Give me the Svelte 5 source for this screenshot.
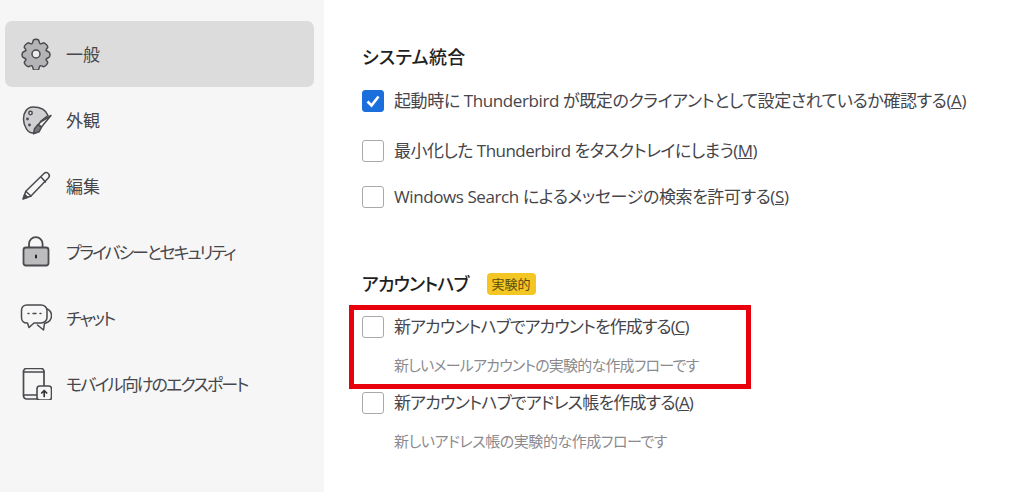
<script>
  const nav = [
    { id: 'gear', label: '一般', active: true },
    { id: 'palette', label: '外観' },
    { id: 'pencil', label: '編集' },
    { id: 'lock', label: 'プライバシーとセキュリティ', spacing: 'tighter' },
    { id: 'chat', label: 'チャット', spacing: 'tight' },
    { id: 'mobile', label: 'モバイル向けのエクスポート', spacing: 'tight' }
  ];
</script>

<div class="page">
  <nav class="side">
    {#each nav as item}
      <div class="item" class:active={item.active}>
        <svg class="ico" viewBox="0 0 32 32" width="32" height="32" fill="none" stroke="#4a4a4f" stroke-width="1.5" stroke-linejoin="round" stroke-linecap="round">
          {#if item.id === 'gear'}
            <path fill="#b4b4b6" d="M13.500 2c.8-1 4.200-1 5 0 .7 1 .6 3.300 1.700 3.800 1.100.5 2.500-1.200 3.900-.9 1.400.3 3.700 2.900 3.600 4.200-.1 1.200-1.900 2.100-1.600 3.200.3 1.100 2.700 1.300 3.300 2.300.5 1 .5 3.400 0 4.300-.6 1-3 1.200-3.300 2.300-.3 1.100 1.500 2 1.600 3.200.1 1.300-2.200 3.900-3.600 4.200-1.400.3-2.800-1.400-3.900-.9-1.100.5-1 2.800-1.700 3.800-.8 1-4.200 1-5 0-.7-1-.6-3.300-1.700-3.800-1.100-.5-2.500 1.200-3.900.9-1.400-.3-3.700-2.900-3.600-4.200.1-1.200 1.900-2.100 1.600-3.200-.3-1.100-2.700-1.300-3.300-2.300-.5-1-.5-3.300 0-4.300.6-1 3-1.200 3.300-2.300.3-1.100-1.500-2-1.600-3.200-.1-1.300 2.200-3.900 3.600-4.200 1.400-.3 2.800 1.400 3.900.9 1.100-.5 1-2.800 1.700-3.800z" />
            <circle cx="16" cy="16" r="4" fill="#ececec" />
          {:else if item.id === 'palette'}
            <path fill="#d0d0d2" d="M13 3C7 3 3.500 8.500 3.500 15c0 7.500 4.500 14 9.500 14 2.500 0 3-1.500 3.500-3.500L21 17l7-5.500C26 6 20 3 13 3z" />
            <circle cx="10.500" cy="9" r="1.700" fill="#f6f6f6" />
            <circle cx="7.500" cy="15" r="1.400" fill="#4a4a4f" stroke="none" />
            <circle cx="9.500" cy="21" r="1.400" fill="#4a4a4f" stroke="none" />
            <path fill="#f6f6f6" d="M31 11.500 20.500 18l-2 2.500 3 2.500 2-2.500z" />
            <path fill="#77777a" d="M18 20.500l3.500 2.800-2.500 4.500-5.500 2 1-5z" />
          {:else if item.id === 'pencil'}
            <path fill="#f6f6f6" d="M24 3.500c1.500-1.500 3.500-1 4.500.2 1 1.200 1.200 3-.2 4.300L11 26l-8 3 2.800-7.800z" />
            <path d="M21 7l4.500 5M6 21.500l5 4.500" />
            <path fill="#4a4a4f" d="M3.500 28.500l1.200-4 2.800 2.800z" />
          {:else if item.id === 'lock'}
            <path d="M9 11.500V8a6.800 6.800 0 0 1 13.600 0v3.500" stroke-width="1.800" />
            <rect x="3.500" y="11.500" width="25" height="18" rx="2.500" fill="#bcbcbe" stroke-width="1.800" />
            <rect x="15" y="18.500" width="2" height="4" rx="1" fill="#222" stroke="none" />
          {:else if item.id === 'chat'}
            <path d="M26 6.500c3.500 1.200 5.500 3.500 5.500 7s-1.500 6-5 7.300l-2 .7-1 6.500-6-5" />
            <path fill="#f6f6f6" d="M7 3h14c3.500 0 6 2.500 6 5.500v7c0 3-2.500 5.500-6 5.500H14l-5 4.500-1.500-4.500H7c-3.500 0-5.500-2.500-5.500-5.500v-7C1.500 5.500 3.500 3 7 3z" />
            <path d="M8 11.500h1M13 11.500h3M20 11.500h1" stroke-width="1.400" />
          {:else}
            <path d="M17 31H6.500c-1.500 0-3-1.300-3-3V3.500c0-1.700 1.500-3 3-3H21c1.500 0 3 1.300 3 3V19" stroke-width="1.700" />
            <path d="M3.500 4h20.500M3.500 27h13" stroke-width="1.400" />
            <rect x="17" y="18" width="14.500" height="14" rx="2.800" fill="#f6f6f6" stroke-width="1.600" />
            <path d="M24.200 28.500v-6M21.700 25 24.200 22.500l2.500 2.500" stroke="#333" stroke-width="1.700" />
          {/if}
        </svg>
        <span class="lab {item.spacing ?? ''}">{item.label}</span>
      </div>
    {/each}
  </nav>

  <main class="main">
    <h2 class="h first">システム統合</h2>
    <label class="row r1"><span class="box on"><svg viewBox="0 0 22 22" width="22" height="22"><path d="M5.500 11.500 9.500 15.500 16.500 6.500" fill="none" stroke="#fff" stroke-width="2.600" /></svg></span><span>起動時に Thunderbird が既定のクライアントとして設定されているか確認する(<u>A</u>)</span></label>
    <label class="row r2"><span class="box"></span><span>最小化した Thunderbird をタスクトレイにしまう(<u>M</u>)</span></label>
    <label class="row r3"><span class="box"></span><span>Windows Search によるメッセージの検索を許可する(<u>S</u>)</span></label>

    <div class="hrow">
      <h2 class="h kana">アカウントハブ</h2>
      <span class="badge">実験的</span>
    </div>
    <div class="hub">
      <div class="mark"></div>
      <label class="row k1"><span class="box"></span><span>新アカウントハブでアカウントを作成する(<u>C</u>)</span></label>
      <p class="desc d1">新しいメールアカウントの実験的な作成フローです</p>
      <label class="row k2"><span class="box"></span><span>新アカウントハブでアドレス帳を作成する(<u>A</u>)</span></label>
      <p class="desc d2">新しいアドレス帳の実験的な作成フローです</p>
    </div>
  </main>
</div>

<style>
  :global(body) { margin: 0; background: #fff; }
  .page {
    display: flex;
    width: 1024px;
    height: 492px;
    overflow: hidden;
    font-family: "Open Sans", "Noto Sans CJK JP", sans-serif;
    font-feature-settings: "palt";
    color: #3c3c41;
  }
  .side {
    flex: 0 0 324px;
    box-sizing: border-box;
    background: #f6f6f6;
    padding: 21px 10px 0 5px;
  }
  .item {
    display: flex;
    align-items: center;
    height: 66px;
    padding-left: 15px;
    border-radius: 7px;
  }
  .item.active { background: #dcdcdc; }
  .ico { flex: none; }
  .lab { margin: -2px 0 0 14px; font-size: 17px; color: #46464b; letter-spacing: 0.1px; }
  .lab.tight { letter-spacing: -1.85px; }
  .lab.tighter { letter-spacing: -2.15px; }
  .main { flex: 1; padding: 0 0 0 38px; }
  .h { margin: 0; font-size: 18px; font-weight: 500; line-height: 24px; color: #1f1f23; letter-spacing: 0.35px; }
  .h.kana { letter-spacing: -0.85px; }
  .first { margin-top: 45px; }
  .row {
    display: flex;
    align-items: center;
    gap: 10px;
    height: 24px;
    font-size: 17px;
    line-height: 24px;
    white-space: nowrap;
    color: #45454a;
  }
  .r1 { margin-top: 20px; letter-spacing: -0.4px; }
  .r2 { margin-top: 26px; letter-spacing: -0.53px; }
  .r3 { margin-top: 22px; letter-spacing: -0.41px; }
  .k1 { letter-spacing: -0.93px; }
  .k2 { letter-spacing: -0.8px; }
  .box {
    flex: none;
    box-sizing: border-box;
    width: 22px;
    height: 22px;
    border: 1px solid #a9a9ac;
    border-radius: 3px;
    background: #fff;
  }
  .box.on { background: #1b6fdc; border-color: #1b6fdc; }
  .box.on svg { display: block; margin: -1px; }
  .hrow { display: flex; align-items: center; gap: 18px; margin-top: 63px; height: 24px; }
  .badge {
    padding: 0 5px;
    height: 22px;
    line-height: 22px;
    font-size: 13px;
    border-radius: 4px;
    background: #f3c623;
    color: #5c4a10;
  }
  .hub { position: relative; margin-top: 19px; }
  .mark {
    position: absolute;
    left: -13px;
    top: -10px;
    width: 392px;
    height: 74px;
    border: 5px solid #e8000c;
    pointer-events: none;
  }
  .desc {
    margin: 14px 0 14px 32px;
    height: 24px;
    font-size: 15px;
    line-height: 24px;
    color: #8b8b8f;
    white-space: nowrap;
  }
  .d1 { letter-spacing: -0.8px; }
  .d2 { letter-spacing: -0.45px; }
</style>
